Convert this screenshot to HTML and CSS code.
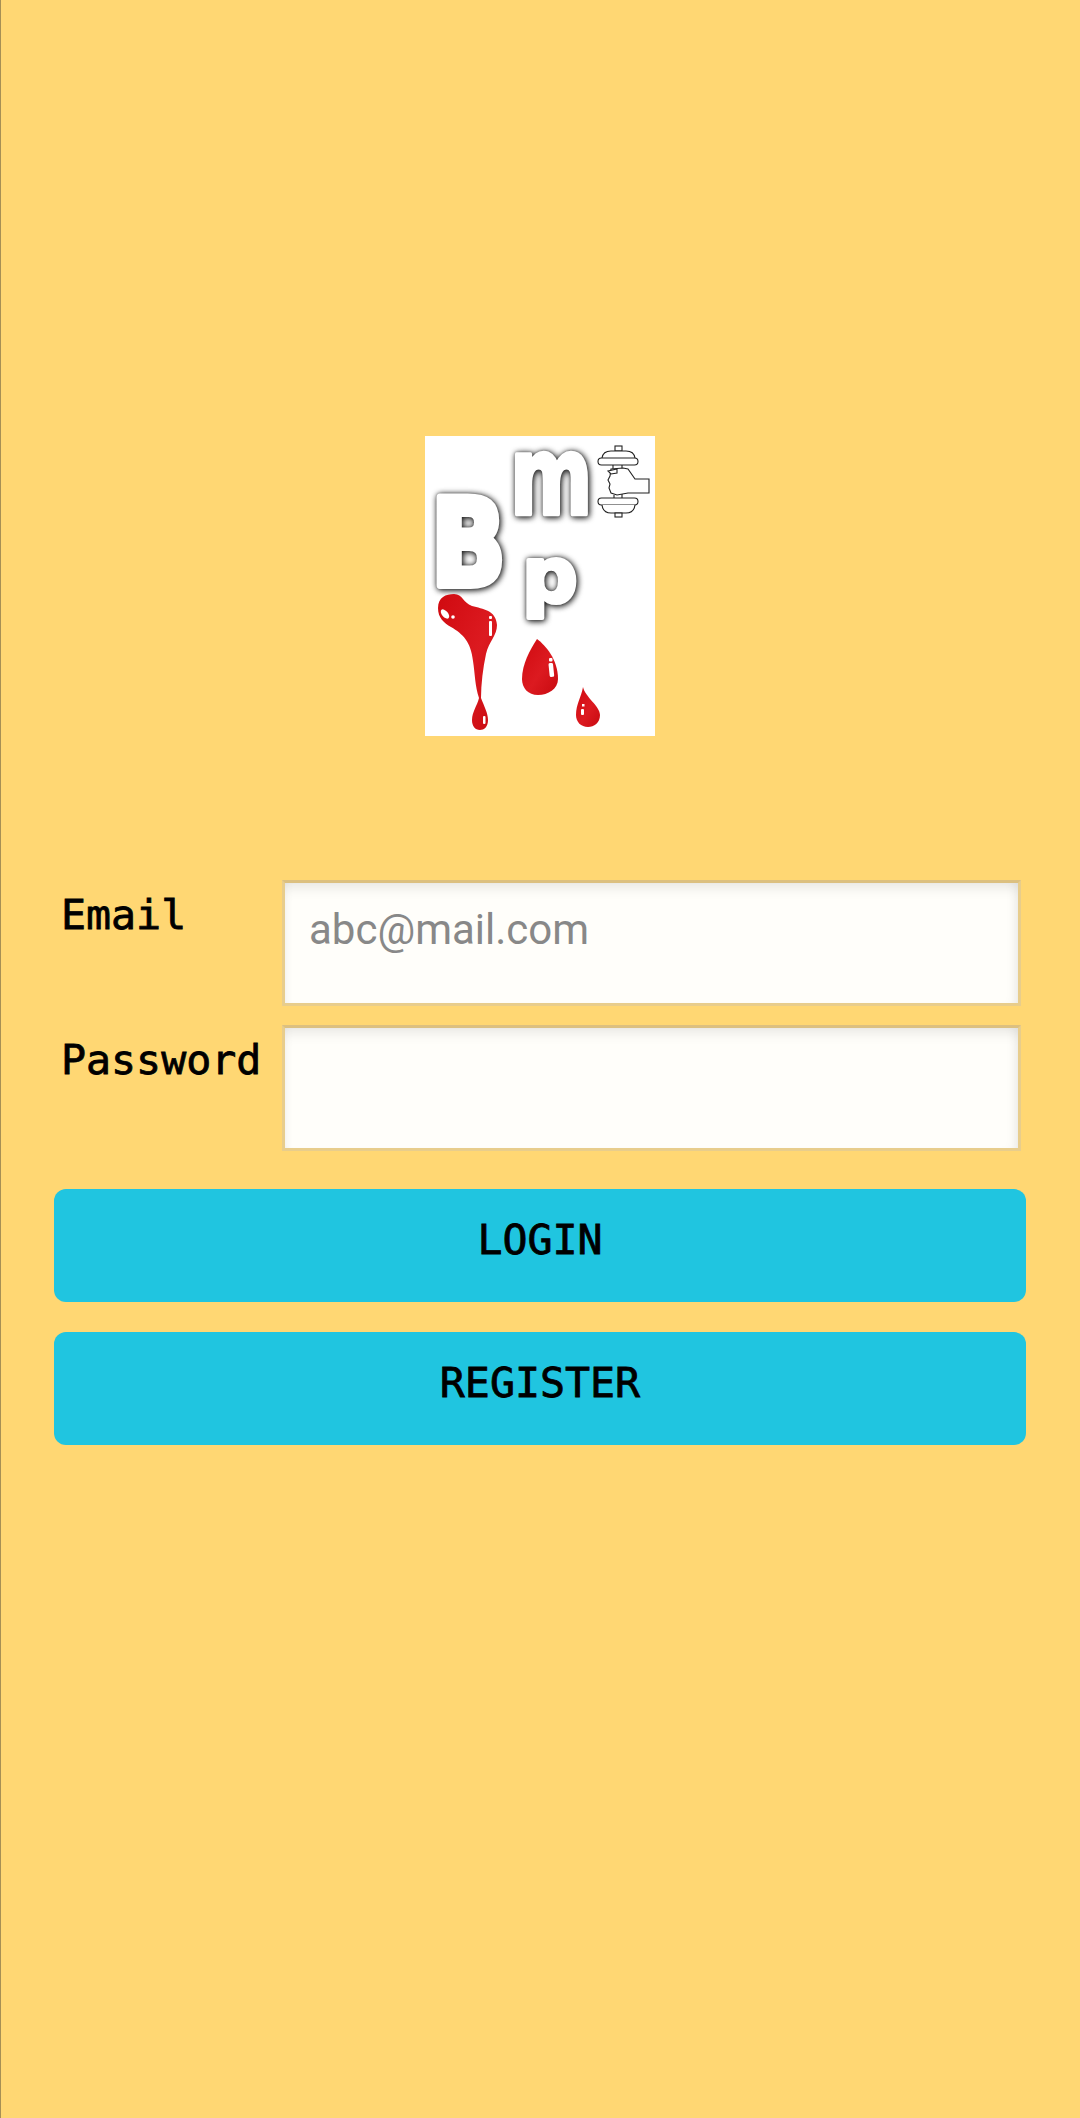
FILE: index.html
```html
<!DOCTYPE html>
<html lang="en">
<head>
    <meta charset="UTF-8">
    <meta name="viewport" content="width=device-width, initial-scale=1.0">
    <title>Login</title>
    <link rel="stylesheet" href="styles.css">
</head>
<body>
    <div class="logo-wrap">
        <svg class="logo" viewBox="0 0 230 300" width="230" height="300" role="img" aria-label="BMP logo">
            <rect width="230" height="300" fill="#fff"/>
            <defs>
                <linearGradient id="blood" x1="0" y1="0" x2="1" y2="1">
                    <stop offset="0" stop-color="#d00a10"/>
                    <stop offset="0.55" stop-color="#dc1a20"/>
                    <stop offset="1" stop-color="#c80a10"/>
                </linearGradient>
            </defs>

            <!-- letters -->
            <g class="letters">
                <text class="letter letter-b" transform="translate(6 149) scale(1.36 1.65)" x="0" y="0">B</text>
                <text class="letter letter-m" transform="translate(85 78) scale(1.1 1.5)" x="0" y="0">m</text>
                <text class="letter letter-p" transform="translate(97 166) scale(1.08 1.06)" x="0" y="0">p</text>
            </g>

            <!-- dumbbell and fist -->
            <g class="dumbbell">
                <rect x="190" y="10" width="7" height="5"/>
                <path d="M177 22 Q178 15 186 15 H201 Q209 15 210 22"/>
                <rect x="173" y="22" width="40" height="7" rx="3.5"/>
                <path d="M188 29 V36 M197 29 V34"/>
                <path d="M186 33 L198 32 L203 33 L210 43 H224 V57 H203 L192 59 L186 57 L184 52 L185 48 L183 44 L185 40 Z"/>
                <path d="M183 35 L192 33 V37 L186 38 Z"/>
                <path d="M189 59 V62 M197 58 V62"/>
                <rect x="173" y="62" width="40" height="7" rx="3.5"/>
                <path d="M177 69 Q178 77 186 77 H201 Q209 77 210 69"/>
                <rect x="190" y="77" width="7" height="4"/>
            </g>

            <!-- blood drops -->
            <path fill="url(#blood)" d="M13 172 C13 161 21 158 29 158 C38 158 38 167 47 170 C58 173 71 174 72 189 C72 200 64 205 61 218 C58 232 56 248 56 262 C59 270 63 277 63 284 C63 291 59 294 55 294 C50 294 47 290 47 284 C47 276 52 270 54 262 C50 250 50 238 48 225 C46 206 38 198 26 191 C19 187 13 182 13 172 Z"/>
            <path fill="url(#blood)" d="M112 203 C120 209 133 223 133 243 C133 253 123 259 113 259 C103 259 97 252 97 243 C97 228 105 214 112 203 Z"/>
            <path fill="url(#blood)" d="M158 251 C160 261 175 270 175 279 C175 287 169 291 163 291 C156 291 151 286 151 279 C151 268 156 262 158 251 Z"/>

            <g class="shine">
                <ellipse cx="20" cy="178" rx="3" ry="5.5" transform="rotate(-40 20 178)"/>
                <circle cx="28" cy="181" r="1.8"/>
                <rect x="64" y="180" width="3" height="3" rx="1"/>
                <rect x="64" y="185" width="3" height="15" rx="1"/>
                <rect x="124" y="222" width="3.5" height="3.5" rx="1"/>
                <rect x="124" y="227" width="4.5" height="14" rx="1.5" transform="rotate(-6 126 233)"/>
                <rect x="157" y="268" width="2.5" height="2.5"/>
                <rect x="156" y="273" width="3" height="6" rx="1"/>
                <rect x="58" y="280" width="2.5" height="8" rx="1"/>
            </g>
        </svg>
    </div>

    <form class="login-form">
        <div class="fields">
            <label class="field-label" for="email">Email</label>
            <input class="field-input" type="text" id="email" placeholder="abc@mail.com">
            <label class="field-label" for="password">Password</label>
            <input class="field-input" type="password" id="password">
        </div>
        <button class="btn" type="button">LOGIN</button>
        <button class="btn" type="button">REGISTER</button>
    </form>
</body>
</html>
```

FILE: styles.css
```css
html, body {
    margin: 0;
    padding: 0;
}
body {
    background-color: #ffd773;
    border-left: 1px solid #a68f55;
    box-sizing: border-box;
    width: 1080px;
    height: 2118px;
    overflow: hidden;
    font-family: "DejaVu Sans Mono", "Liberation Mono", monospace;
    color: #000;
}
.logo-wrap {
    display: flex;
    justify-content: center;
    padding-top: 436px;
    margin-left: -1px;
}
.logo {
    display: block;
    overflow: visible;
}
.letter {
    font-family: "DejaVu Sans", sans-serif;
    font-weight: bold;
    font-size: 72px;
    fill: #fff;
    stroke: #fff;
    stroke-linejoin: round;
}
.letter-b {
    stroke-width: 5px;
}
.letter-m {
    stroke-width: 3px;
}
.letter-p {
    stroke-width: 4px;
}
.letters {
    filter: drop-shadow(1px 1px 3px rgba(0, 0, 0, 0.9)) drop-shadow(0 0 1px rgba(0, 0, 0, 0.4));
}
.dumbbell rect,
.dumbbell path {
    fill: #fff;
    stroke: #222;
    stroke-width: 1.1;
}
.shine {
    fill: #fff;
}
.login-form {
    padding: 144px 53px 0;
}
.fields {
    display: grid;
    grid-template-columns: 221px 739px;
    row-gap: 19px;
    padding-left: 7px;
    margin-bottom: 38px;
}
.field-label {
    font-size: 41.6px;
    line-height: 50px;
    padding-top: 10px;
    -webkit-text-stroke: 0.8px #000;
}
.field-input {
    box-sizing: border-box;
    width: 739px;
    height: 126px;
    padding: 0 24px 28px;
    border: 3px solid #e8cd8c;
    border-top-color: #dcc080;
    background-color: #fffefa;
    box-shadow: inset 0 10px 14px -6px rgba(0, 0, 0, 0.1), inset -10px 0 12px -8px rgba(0, 0, 0, 0.08), inset 8px 0 10px -8px rgba(0, 0, 0, 0.05);
    font-family: Roboto, sans-serif;
    font-size: 42px;
    outline: none;
}
.field-input::placeholder {
    color: #888;
    opacity: 1;
}
.btn {
    display: block;
    box-sizing: border-box;
    width: 972px;
    height: 113px;
    padding: 0 0 12px;
    margin-bottom: 30px;
    border: none;
    border-radius: 12px;
    background-color: #20c5e0;
    color: #000;
    font-family: "DejaVu Sans Mono", "Liberation Mono", monospace;
    font-size: 41.6px;
    -webkit-text-stroke: 0.8px #000;
}
```
